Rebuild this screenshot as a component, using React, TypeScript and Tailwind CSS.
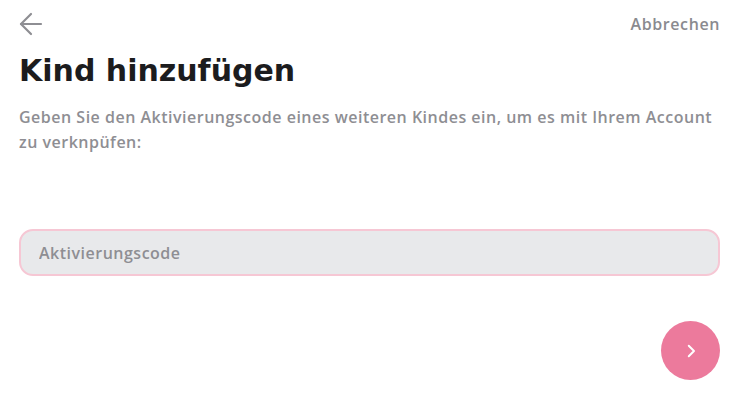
import { useState } from 'react';

export default function App() {
  const [code, setCode] = useState('');

  return (
    <div className="w-[753px] h-[402px] bg-white pl-[19px] pr-[33px] pt-[12px] font-['DejaVu_Sans',sans-serif] overflow-hidden">
      {/* Top bar */}
      <div className="flex items-center justify-between h-[24px]">
        <button className="text-[#8e8e93]">
          <svg width="24" height="24" viewBox="0 0 24 24" fill="none" stroke="currentColor" strokeWidth="2.2" strokeLinecap="round" strokeLinejoin="round">
            <path d="M22 12H2" />
            <path d="M12 2L2 12l10 10" />
          </svg>
        </button>
        <button className="font-['Open_Sans',sans-serif] text-[16px] font-semibold tracking-[0.6px] text-[#8a8a8f]">Abbrechen</button>
      </div>

      {/* Header */}
      <h1 className="mt-[17px] text-[30px] leading-[36px] font-bold text-[#1c1c1e]">
        Kind hinzufügen
      </h1>
      <p className="mt-[16px] font-['Open_Sans',sans-serif] text-[16px] leading-[25px] font-semibold tracking-[0.5px] text-[#8e8e93]">
        Geben Sie den Aktivierungscode eines weiteren Kindes ein, um es mit Ihrem Account zu verknpüfen:
      </p>

      {/* Input */}
      <input
        autoFocus
        value={code}
        onChange={e => setCode(e.target.value)}
        placeholder="Aktivierungscode"
        className="mt-[74px] w-full h-[47px] rounded-[14px] border-2 border-[#f6c7d4] bg-[#e8e9eb] px-[18px] font-['Open_Sans',sans-serif] text-[16px] font-semibold tracking-[0.5px] text-[#1c1c1e] placeholder:text-[#8e8e93] outline-none"
      />

      {/* Next */}
      <div className="flex justify-end mt-[45px]">
        <button className="w-[59px] h-[59px] rounded-full bg-[#ec7a9c] flex items-center justify-center text-white">
          <svg width="18" height="18" viewBox="0 0 24 24" fill="none" stroke="currentColor" strokeWidth="2.6" strokeLinecap="round" strokeLinejoin="round">
            <path d="M9 5l7 7-7 7" />
          </svg>
        </button>
      </div>
    </div>
  );
}
